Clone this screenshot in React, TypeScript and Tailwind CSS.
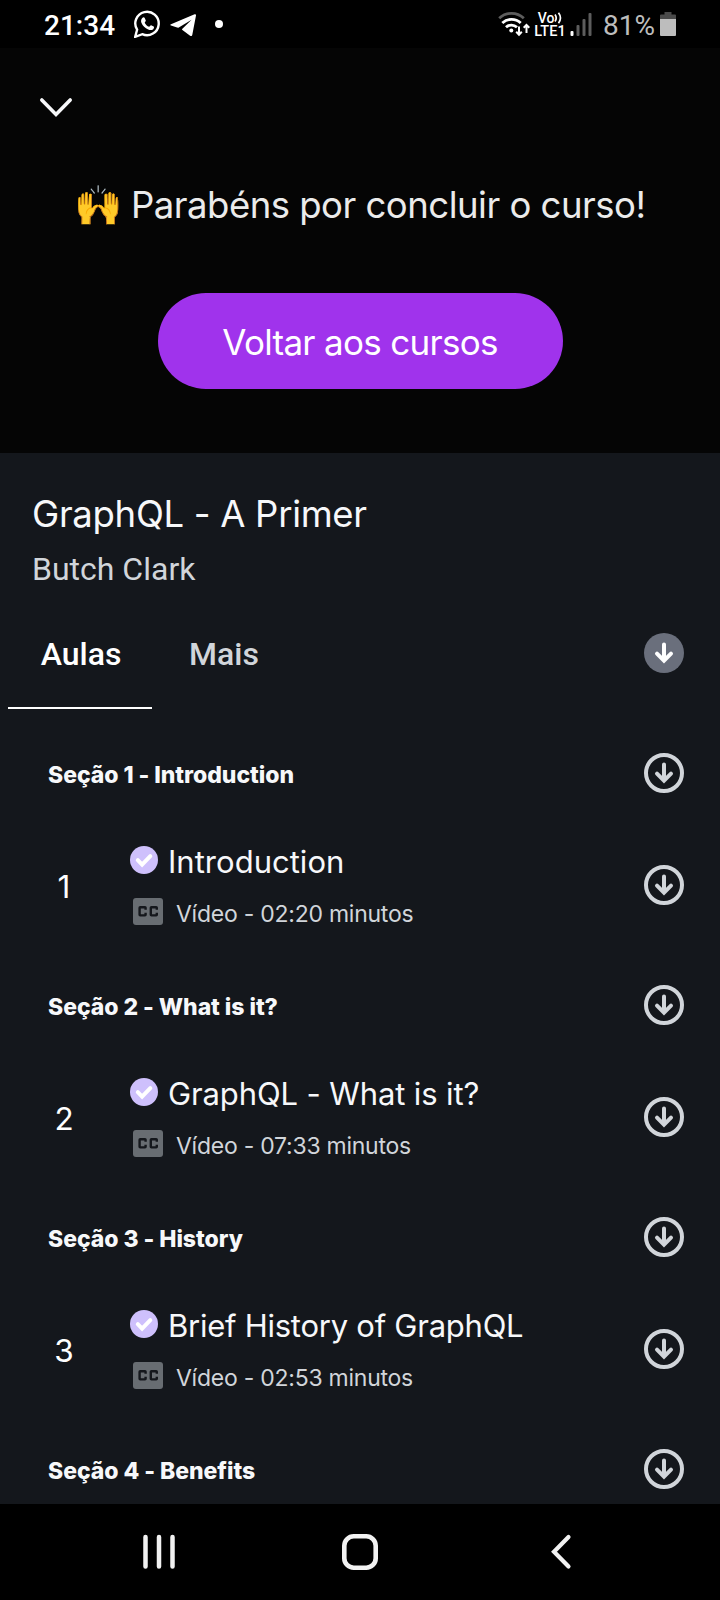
type Lesson = {
  section: string;
  number: number;
  title: string;
  duration: string;
  tracking: string;
};

const lessons: Lesson[] = [
  { section: "Seção 1 - Introduction", number: 1, title: "Introduction", duration: "02:20", tracking: "tracking-[0.02px]" },
  { section: "Seção 2 - What is it?", number: 2, title: "GraphQL - What is it?", duration: "07:33", tracking: "tracking-[-0.12px]" },
  { section: "Seção 3 - History", number: 3, title: "Brief History of GraphQL", duration: "02:53", tracking: "tracking-[-0.25px]" },
];

function DownloadIcon({ filled = false }: { filled?: boolean }) {
  return (
    <svg className="size-10 shrink-0" viewBox="0 0 40 40" fill="none">
      {filled ? (
        <circle cx="20" cy="20" r="20" fill="#6a6f7c" />
      ) : (
        <circle cx="20" cy="20" r="18" stroke="#d1d5da" strokeWidth="4" />
      )}
      <path
        d="M20 11.500V26.500M13 20.600l7 7 7-7"
        stroke={filled ? "#ffffff" : "#d1d5da"}
        strokeWidth="4"
        strokeLinecap="round"
      />
    </svg>
  );
}

function CheckIcon() {
  return (
    <svg className="size-7 shrink-0" viewBox="0 0 28 28" fill="none">
      <circle cx="14" cy="14" r="14" fill="#cec0fc" />
      <path d="M7.800 14.200l4.300 4.400 8.200-8.400" stroke="#ffffff" strokeWidth="4" strokeLinecap="round" />
    </svg>
  );
}

function CaptionsIcon() {
  return (
    <svg className="h-[27px] w-[30px] shrink-0" viewBox="0 0 30 27" fill="none">
      <rect width="30" height="27" rx="3" fill="#686d72" />
      <path
        d="M12.600 11.800v-2a.6.6 0 0 0-.6-.6H7.200a.6.6 0 0 0-.6.6v7a.6.6 0 0 0 .6.6H12a.6.6 0 0 0 .6-.6v-2M23.800 11.800v-2a.6.6 0 0 0-.6-.6h-4.800a.6.6 0 0 0-.6.6v7a.6.6 0 0 0 .6.6h4.800a.6.6 0 0 0 .6-.6v-2"
        stroke="#14171c"
        strokeWidth="2.400"
      />
    </svg>
  );
}

function StatusBar() {
  return (
    <div className="flex h-12 shrink-0 items-center bg-black pr-11 pl-11 font-[Roboto,sans-serif]">
      <span className="w-[90px] pt-1 text-[28px] leading-8 font-medium text-white">21:34</span>
      <svg className="h-7 w-[27px]" viewBox="0 0 27 28" fill="none">
        <path d="M1.200 26.800l1.900-7.100A11.700 11.700 0 1 1 8.300 24.200z" stroke="#fff" strokeWidth="2.400" />
        <path
          d="M8.300 8c.8-.9 2-.9 2.400 0l1.100 2.500c.2.6-.9 1.600-1.100 2.200.9 1.900 2.400 3.300 4.400 4.100.6-.2 1.400-1.700 2-1.500l2.600 1.300c.7.4.2 2-.5 2.600-1.400 1.200-3.300 1-5 .3-3.200-1.300-5.500-3.700-6.800-6.700-.7-1.800-.3-3.400.9-4.800z"
          fill="#fff"
        />
      </svg>
      <svg className="mt-[2px] ml-[9px] h-[23px] w-[27px]" viewBox="0 0 27 23" fill="#fff">
        <path d="M1 10.300L24.600.3c1-.4 1.600.2 1.400 1.200l-3.700 19.200c-.2 1.200-1 1.700-2.200 1L12.400 16.100c-.5-.4-.5-.9 0-1.400L21.600 5.800 8.800 13.500c-.6.3-1.100.3-1.700.1L1 11.600c-.9-.3-.9-1 0-1.300z" />
      </svg>
      <svg className="ml-[18px] size-2" viewBox="0 0 8 8">
        <circle cx="4" cy="4" r="4" fill="#fff" />
      </svg>

      <svg className="ml-auto h-[26px] w-8" viewBox="0 0 32 26" fill="none">
        <path d="M1.200 7.300a17.800 17.800 0 0 1 24.600 0" stroke="#5d5d5d" strokeWidth="2.800" />
        <path d="M4.300 12a13.300 13.300 0 0 1 18.400 0" stroke="#fff" strokeWidth="2.800" />
        <path d="M8 16.300a8 8 0 0 1 11 0" stroke="#fff" strokeWidth="2.800" />
        <circle cx="13.300" cy="19.500" r="2" fill="#fff" />
        <path
          d="M21 15.500v8M18.200 20.800l2.800 2.900 2.800-2.900M28.500 22v-8M25.700 16.800l2.800-2.900 2.800 2.900"
          stroke="#fff"
          strokeWidth="2"
        />
      </svg>
      <div className="ml-1 flex w-8 flex-col items-center pt-px font-medium text-white">
        <div className="flex h-[13px] items-center">
          <span className="text-[14px] leading-[13px]">Vo</span>
          <svg className="h-3 w-2" viewBox="0 0 8 12" fill="none" stroke="#fff" strokeWidth="1.700">
            <path d="M1 2.500Q3.400 6 1 9.500M4.500.8Q8.400 6 4.500 11.200" />
          </svg>
        </div>
        <span className="text-[14.500px] leading-[13px] tracking-[0.1px]">LTE1</span>
      </div>
      <svg className="ml-1 h-[24px] w-[23px]" viewBox="0 0 23 24">
        <rect x="0.500" y="19" width="3" height="5" rx="1" fill="#fff" />
        <rect x="6.500" y="13" width="3" height="11" rx="1" fill="#5d5d5d" />
        <rect x="12.500" y="7" width="3" height="17" rx="1" fill="#5d5d5d" />
        <rect x="18.500" y="1" width="3" height="23" rx="1" fill="#5d5d5d" />
      </svg>
      <span className="ml-[10px] w-[55px] pt-1 text-[28px] leading-8 text-[#bdbdbd]">81%</span>
      <svg className="ml-[2px] h-6 w-4" viewBox="0 0 16 24">
        <path d="M4.500 0h7v2.500H15a1 1 0 0 1 1 1V7H0V3.500a1 1 0 0 1 1-1h3.500z" fill="#4a4a4a" />
        <path d="M0 7h16v16a1 1 0 0 1-1 1H1a1 1 0 0 1-1-1z" fill="#bdbdbd" />
      </svg>
    </div>
  );
}

function SectionHeading({ children }: { children: string }) {
  return (
    <div className="flex h-[68px] items-center justify-between pr-9 pl-12">
      <h2 className="pt-1 text-[23px] leading-8 font-extrabold tracking-[-0.05px] text-[#f7f8fa]">{children}</h2>
      <DownloadIcon />
    </div>
  );
}

function LessonRow({ lesson }: { lesson: Lesson }) {
  return (
    <div className="mb-2 flex h-[156px] items-center pr-9">
      <span className="w-32 pt-[3px] text-center text-[31.500px] leading-10 text-white">{lesson.number}</span>
      <div className="flex grow flex-col gap-[14px] pb-[2px]">
        <div className="flex items-center pl-[2px]">
          <CheckIcon />
          <span className={`pt-1 pl-[10px] text-[31px] leading-9 text-[#f7f8fa] ${lesson.tracking}`}>
            {lesson.title}
          </span>
        </div>
        <div className="flex items-center pl-[5px]">
          <CaptionsIcon />
          <span className="pt-[6px] pl-[13px] text-[23px] leading-7 tracking-[-0.25px] text-[#d1d5da]">
            Vídeo - {lesson.duration} minutos
          </span>
        </div>
      </div>
      <DownloadIcon />
    </div>
  );
}

export default function App() {
  return (
    <div className="flex h-[1600px] w-[720px] flex-col overflow-hidden bg-[#14171c] font-[Inter,sans-serif] whitespace-nowrap">
      <StatusBar />

      <header className="flex h-[405px] shrink-0 flex-col items-center bg-[#050505]">
        <svg className="mt-[49px] ml-[39px] h-[22px] w-[34px] self-start" viewBox="0 0 34 22" fill="none">
          <path d="M2.800 3L17 17.500 31.200 3" stroke="#f7f8fa" strokeWidth="3.600" strokeLinecap="round" />
        </svg>
        <h1 className="mt-[62px] flex h-[48px] w-full items-center pl-[74px] text-[36.500px] tracking-[-0.5px] text-[#ebebeb]">
          <span className="w-[57px] pb-px text-[39px] leading-[48px] tracking-normal">🙌</span>
          <span>Parabéns por concluir o curso!</span>
        </h1>
        <button className="mt-[64px] h-24 w-[405px] rounded-full bg-[#a033ec] pt-[3px] text-[35px] tracking-[-0.7px] text-white">
          Voltar aos cursos
        </button>
      </header>

      <div className="flex shrink-0 flex-col pt-[37px] pl-8">
        <div className="text-[36.500px] leading-[48px] tracking-[-0.3px] text-[#f7f8fa]">GraphQL - A Primer</div>
        <div className="mt-[11px] font-[Roboto,sans-serif] text-[32px] leading-[40px] text-[#d1d5da]">Butch Clark</div>
      </div>

      <nav className="mt-[10px] flex h-[110px] shrink-0 items-start pr-9 pl-2 font-[Roboto,sans-serif] text-[32px] font-medium">
        <div className="flex h-[110px] w-36 items-center justify-center border-b-2 border-white pt-[2px] pl-[2px] text-white">
          <span>Aulas</span>
        </div>
        <div className="flex h-[110px] w-36 items-center justify-center text-[#d1d5da]">Mais</div>
        <div className="ml-auto flex h-[108px] items-center">
          <DownloadIcon filled />
        </div>
      </nav>

      <main className="mt-[30px] min-h-0 grow overflow-hidden">
        {lessons.map((lesson) => (
          <section key={lesson.number}>
            <SectionHeading>{lesson.section}</SectionHeading>
            <LessonRow lesson={lesson} />
          </section>
        ))}
        <SectionHeading>Seção 4 - Benefits</SectionHeading>
      </main>

      <footer className="flex h-24 shrink-0 items-center bg-black pl-[142px]">
        <svg className="h-9 w-[34px]" viewBox="0 0 34 36" stroke="#f2f2f2" strokeWidth="4.500" strokeLinecap="round">
          <path d="M3.500 3V32.500M17 3V32.500M30.500 3V32.500" />
        </svg>
        <svg className="ml-[166px] size-9" viewBox="0 0 36 36" fill="none">
          <rect x="2.300" y="2.300" width="31.400" height="31.400" rx="9.500" stroke="#f2f2f2" strokeWidth="4.600" />
        </svg>
        <svg className="ml-[172px] h-9 w-[22px]" viewBox="0 0 22 36" fill="none">
          <path d="M18.500 3L4 17.800 18.500 32.500" stroke="#f2f2f2" strokeWidth="4.200" strokeLinecap="round" />
        </svg>
      </footer>
    </div>
  );
}
